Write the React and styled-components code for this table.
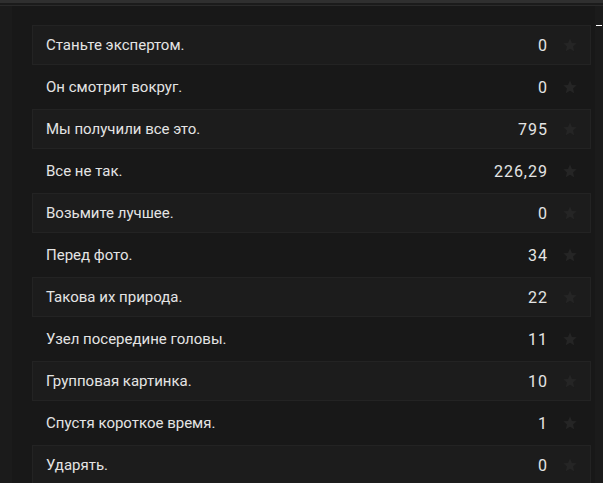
import React from "react";
import styled, { createGlobalStyle } from "styled-components";

const Global = createGlobalStyle`
  html, body { margin: 0; padding: 0; background: #181818; }
  body { font-family: "Roboto", "Noto Sans", sans-serif; overflow: hidden; }
`;

const Page = styled.div`
  width: 603px;
  height: 483px;
  display: flex;
  flex-direction: column;
  background: #181818;
  overflow: hidden;
`;

const TopBar = styled.div`
  height: 3px;
  background: #2f2f2f;
  border-bottom: 2px solid #1b1b1b;
  box-shadow: 0 1px 0 #2a2a2a;
  margin-bottom: 1px;
  flex-shrink: 0;
`;

const Body = styled.div`
  flex: 1;
  display: flex;
  min-height: 0;
`;

const SideStrip = styled.div`
  width: ${(p) => p.$w}px;
  box-sizing: border-box;
  padding-top: ${(p) => p.$pt || 0}px;
  background: #1b1b1b;
  flex-shrink: 0;
`;

const Tick = styled.div`
  margin-left: 1px;
  width: 6px;
  height: 1px;
  background: #ffffff;
`;

const Main = styled.div`
  flex: 1;
  padding: 19px 4px 0 20px;
  display: flex;
  flex-direction: column;
  gap: 2px;
`;

const Row = styled.div`
  height: 40px;
  box-sizing: border-box;
  flex-shrink: 0;
  display: flex;
  align-items: center;
  padding: 0 12px 0 13px;
  background: ${(p) => (p.$boxed ? "#1c1c1c" : "transparent")};
  border: 1px solid ${(p) => (p.$boxed ? "#232323" : "transparent")};
  color: #e4e4e4;
  font-size: 15px;
`;

const Label = styled.span`
  flex: 1;
`;

const Value = styled.span`
  margin-right: 14px;
  font-size: 16px;
  letter-spacing: 1px;
`;

const Star = styled.svg`
  width: 16px;
  height: 16px;
  fill: #252525;
`;

const rows = [
  ["Станьте экспертом.", "0"],
  ["Он смотрит вокруг.", "0"],
  ["Мы получили все это.", "795"],
  ["Все не так.", "226,29"],
  ["Возьмите лучшее.", "0"],
  ["Перед фото.", "34"],
  ["Такова их природа.", "22"],
  ["Узел посередине головы.", "11"],
  ["Групповая картинка.", "10"],
  ["Спустя короткое время.", "1"],
  ["Ударять.", "0"],
];

export default function App() {
  return (
    <Page>
      <Global />
      <TopBar />
      <Body>
        <SideStrip $w={12} />
        <Main>
          {rows.map(([label, value], i) => (
            <Row key={i} $boxed={i % 2 === 0}>
              <Label>{label}</Label>
              <Value>{value}</Value>
              <Star viewBox="0 0 24 24">
                <path d="M12 2l2.9 6.9 7.1.6-5.4 4.7 1.7 7.3L12 17.6 5.7 21.5l1.7-7.3L2 9.5l7.1-.6z" />
              </Star>
            </Row>
          ))}
        </Main>
        <SideStrip $w={8} $pt={19}>
          <Tick />
        </SideStrip>
      </Body>
    </Page>
  );
}
